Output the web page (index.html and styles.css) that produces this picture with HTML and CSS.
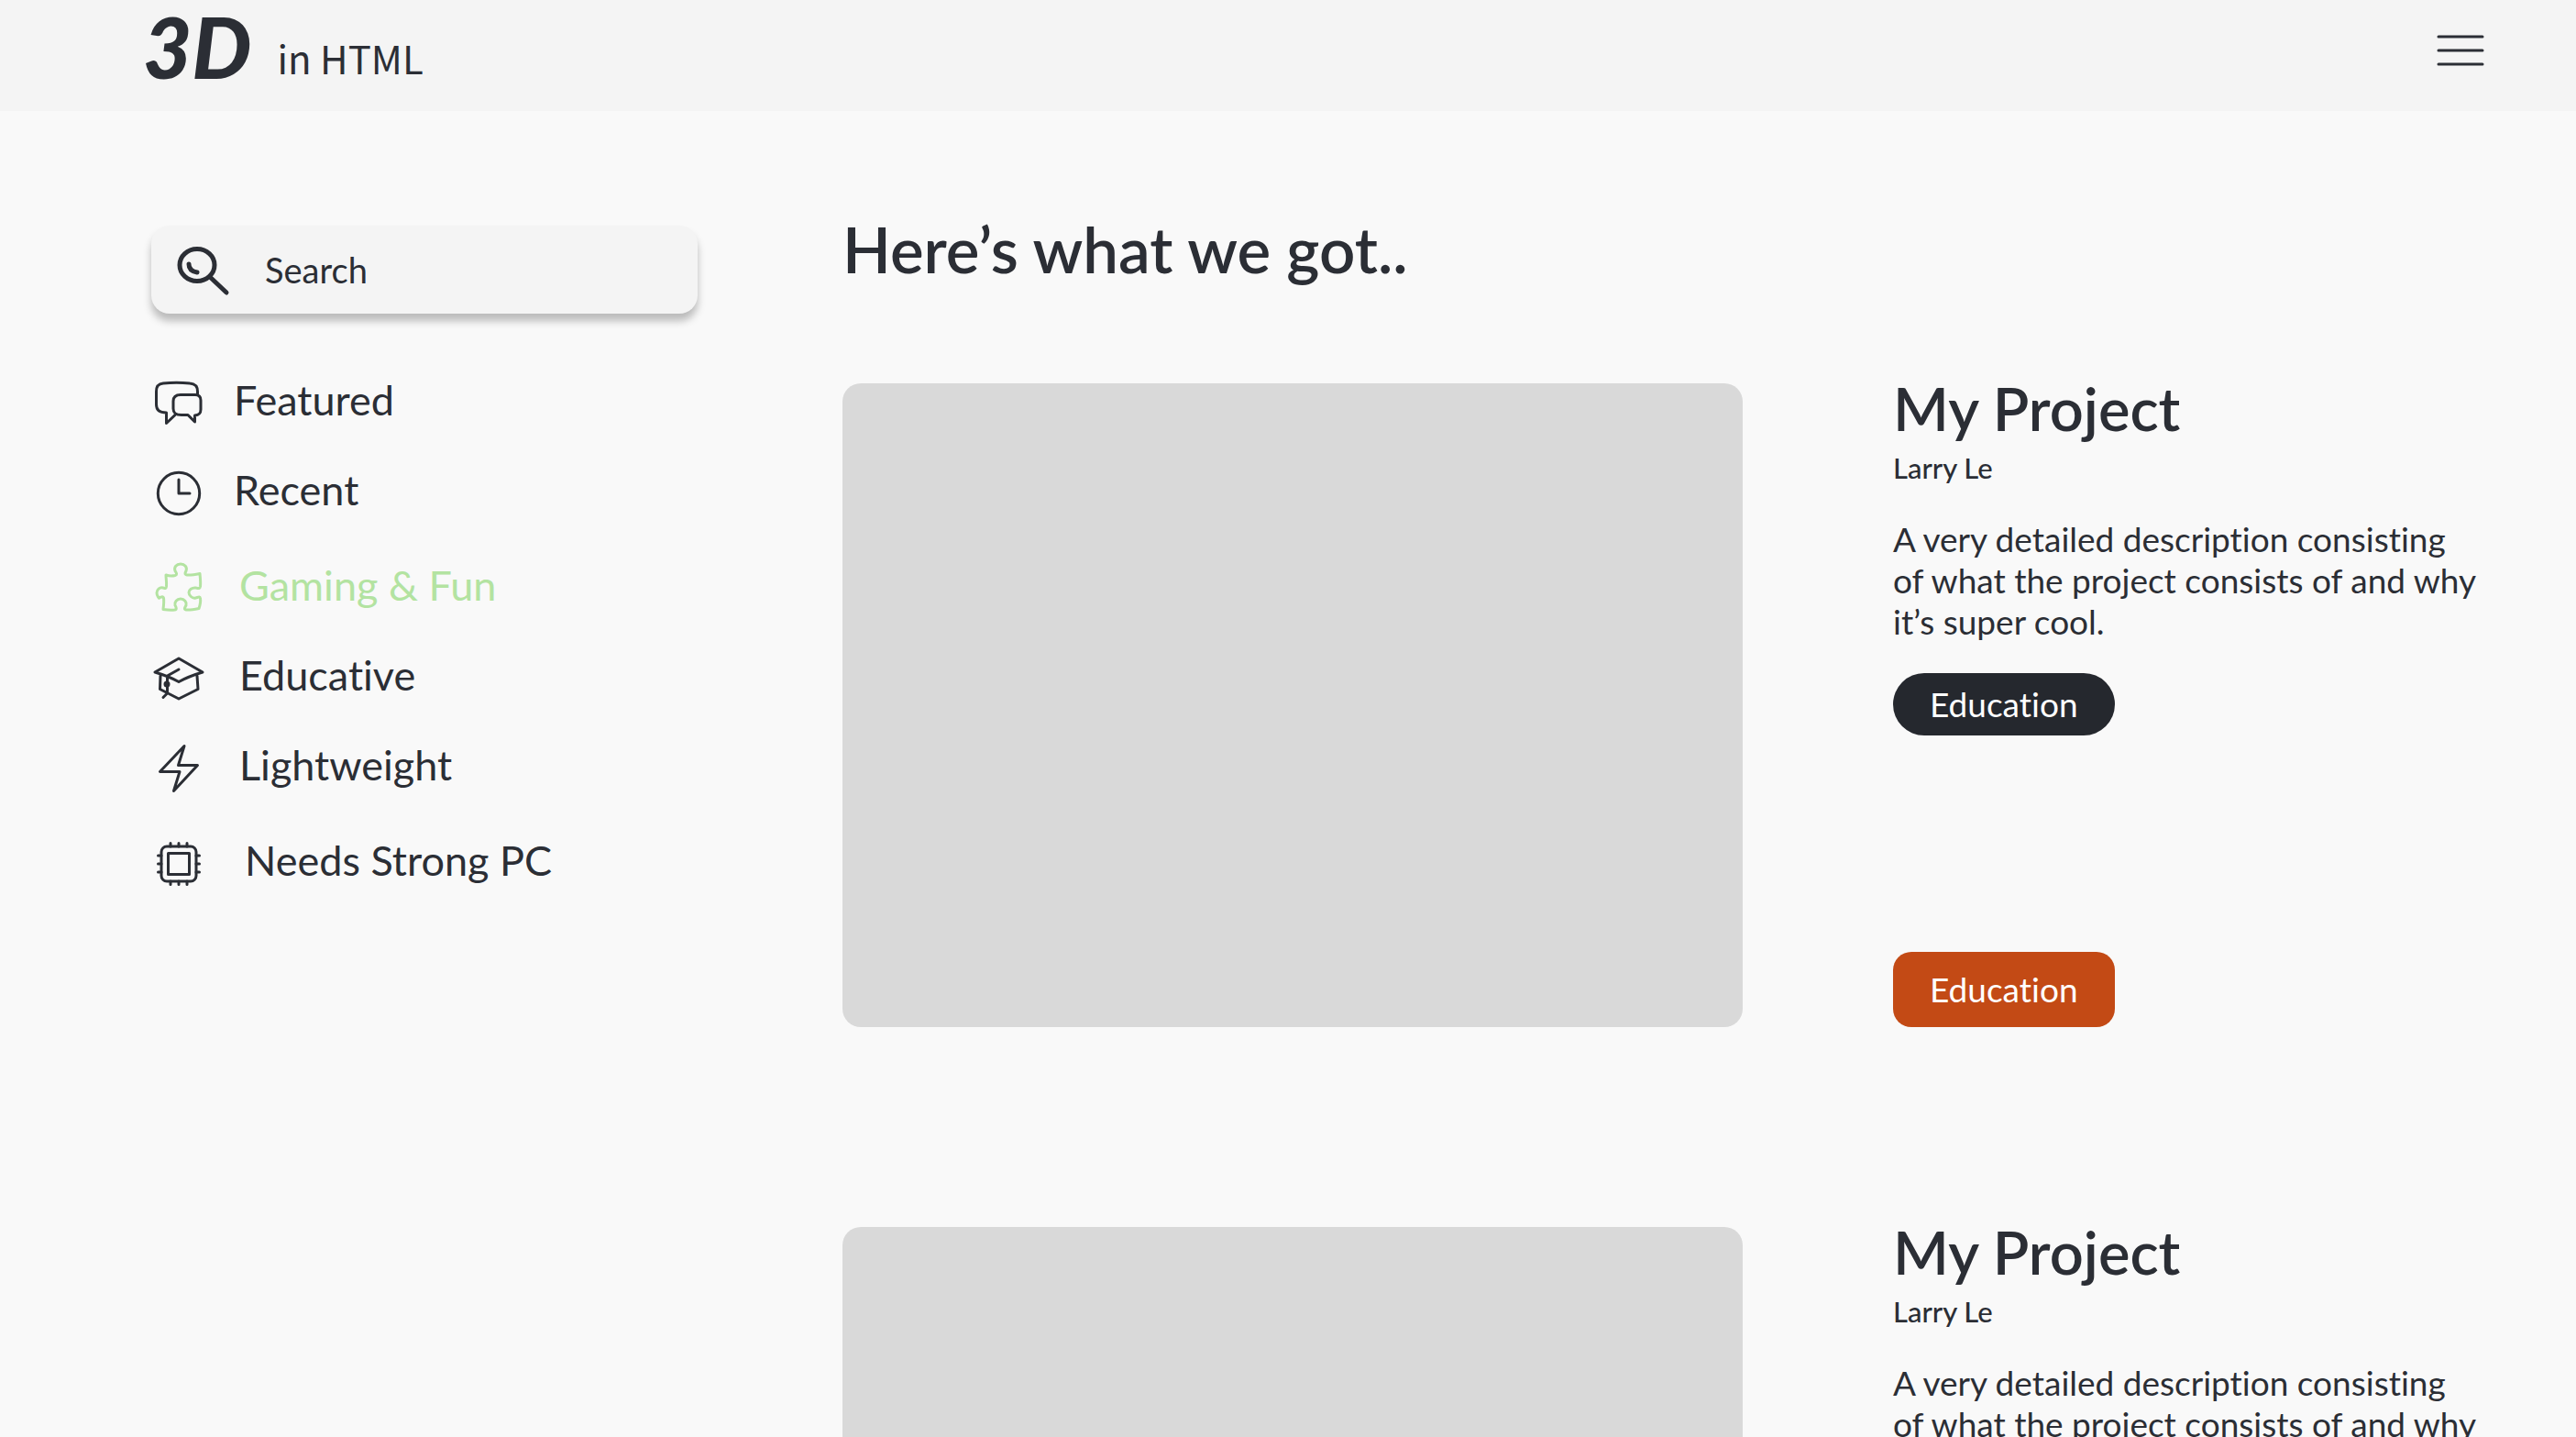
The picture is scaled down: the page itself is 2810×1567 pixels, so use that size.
FILE: index.html
```html
<!DOCTYPE html>
<html lang="en">
<head>
<meta charset="utf-8">
<meta name="viewport" content="width=device-width, initial-scale=1">
<title>3D in HTML</title>
<link rel="stylesheet" href="styles.css">
</head>
<body>
<header class="topbar">
  <a class="brand" href="#"><span class="brand-mark">3D</span><span class="brand-text">in HTML</span></a>
  <button class="menu-button" type="button" aria-label="Menu">
    <svg class="menu-icon" viewBox="0 0 52 36" aria-hidden="true"><path d="M2 3h48M2 18h48M2 33h48"/></svg>
  </button>
</header>

<div class="layout">
  <aside class="sidebar">
    <label class="search">
      <svg class="search-icon" viewBox="0 0 58 54" aria-hidden="true"><ellipse cx="22" cy="22" rx="19" ry="17.500"/><path d="M36 35l18 17M13 21c0 5 3 8 9 9"/></svg>
      <input class="search-input" type="search" placeholder="Search" aria-label="Search">
    </label>

    <nav class="filters" aria-label="Categories">
      <div class="filter-group">
        <a class="filter" href="#">
          <svg class="icon" viewBox="0 0 60 60" aria-hidden="true"><path d="M50.500 20.500V17C50.500 11 48 8.500 42 8c-9-1-20-1-29 0C7.500 8.500 5.500 11 5.500 17v14c0 6 3 9 11 9v11.500L26 42.500M32 20.500h16c4 0 6 2 6 6v10c0 4-1.500 6-6.500 6.500v7L40 42.500h-7c-6.500 0-9-2-9-7v-8c0-5 2.500-7 8-7z"/></svg>
          <span class="filter-label">Featured</span>
        </a>
        <a class="filter" href="#">
          <svg class="icon" viewBox="0 0 60 60" aria-hidden="true"><circle cx="30" cy="30" r="22.700"/><path d="M30 15v15h12"/></svg>
          <span class="filter-label">Recent</span>
        </a>
      </div>
      <div class="filter-group filter-group-mid">
        <a class="filter filter-active" href="#" aria-current="page">
          <svg class="icon" viewBox="0 0 60 60" aria-hidden="true"><path d="M16 15c3 1 8 1 10 .500 3-1 1-3 0-5-1.500-4 1.500-7.500 6-7.500s7.500 3.500 6 7.500c-1 2-2 4 1 4.500 4 .500 9-.500 14-1.500.500 5 1 10 .500 14-.500 3-2.500 2-5 1.500-4-.500-7.500 2-7.500 5s3.500 7 7.500 6c2.500-.500 4.500-2 5 .500.500 3-.500 8-1.500 11-5 1-10 2-14 1.500-3-.500-1-3 0-5 1-3.500-2-7-6-7s-7 3.500-6 7c1 2 2.500 4.500-.500 5-4 .500-9 0-12.500-.500.500-4 1-9 .500-12.500-.500-2.500-2.500-1-5 0C9 41 6 38 6 34.500S9 28 13 29c2 .500 3 1.500 3.500-1.500.500-4-.500-8.500-.500-12.500z"/></svg>
          <span class="filter-label">Gaming &amp; Fun</span>
        </a>
        <a class="filter" href="#">
          <svg class="icon" viewBox="0 0 60 60" aria-hidden="true"><path d="M30 8L56 23C46 26 38 29 30 33.500 22 29 14 26 4 23zM10 27L9.500 41.500 30 52 51 41.500 50 27M30 20L17.500 27V46L13 50.500"/><circle class="solid" cx="17" cy="36" r="2"/></svg>
          <span class="filter-label">Educative</span>
        </a>
        <a class="filter" href="#">
          <svg class="icon" viewBox="0 0 60 60" aria-hidden="true"><path d="M36 5.500L9.500 33.500H31L24.500 54.500 50.500 26.500H29.500z"/></svg>
          <span class="filter-label">Lightweight</span>
        </a>
      </div>
      <div class="filter-group filter-group-last">
        <a class="filter" href="#">
          <svg class="icon" viewBox="0 0 60 60" aria-hidden="true"><rect x="11" y="11" width="38" height="38" rx="6"/><rect x="18.500" y="18.500" width="23" height="23"/><path d="M21 11V7.500M30 11V7.500M39 11V7.500M21 52.500V49M30 52.500V49M39 52.500V49M11 21H7.500M11 30H7.500M11 39H7.500M52.500 21H49M52.500 30H49M52.500 39H49"/></svg>
          <span class="filter-label">Needs Strong PC</span>
        </a>
      </div>
    </nav>
  </aside>

  <main class="results">
    <h1 class="results-title">Here’s what we got..</h1>
    <article class="project">
      <div class="preview"></div>
      <div class="details">
        <h2 class="project-title">My Project</h2>
        <p class="author">Larry Le</p>
        <p class="description">A very detailed description consisting of what the project consists of and why it’s super cool.</p>
        <span class="tag">Education</span>
        <button class="action" type="button">Education</button>
      </div>
    </article>
    <article class="project">
      <div class="preview"></div>
      <div class="details">
        <h2 class="project-title">My Project</h2>
        <p class="author">Larry Le</p>
        <p class="description">A very detailed description consisting of what the project consists of and why it’s super cool.</p>
        <span class="tag">Education</span>
        <button class="action" type="button">Education</button>
      </div>
    </article>
  </main>
</div>
</body>
</html>
```
FILE: styles.css
```css
:root {
  --ink: #2b2e35;
  --page: #f9f9f9;
  --surface: #f4f4f4;
  --accent: #b3e3a1;
}

* {
  box-sizing: border-box;
}

body {
  margin: 0;
  background: var(--page);
  color: var(--ink);
  font-family: Lato, "Liberation Sans", sans-serif;
  font-size: 37px;
  line-height: 45px;
  font-variant-ligatures: none;
}

h1,
h2,
p {
  margin: 0;
}

button,
input {
  font: inherit;
  font-variant-ligatures: none;
  color: inherit;
}

a {
  color: inherit;
  text-decoration: none;
}

.topbar {
  display: flex;
  justify-content: space-between;
  align-items: flex-start;
  height: 121px;
  padding: 0 94px 0 156px;
  background: var(--surface);
}

.brand {
  display: flex;
  align-items: center;
  gap: 28px;
}

.brand-mark {
  font-size: 92px;
  line-height: 102px;
  font-weight: 900;
  font-style: italic;
}

.brand-text {
  padding-top: 24px;
  font-family: "Noto Sans CJK JP", "Noto Sans", sans-serif;
  font-size: 42px;
  line-height: 60px;
}

.menu-button {
  margin-top: 37px;
  padding: 0 6px;
  border: 0;
  background: none;
  line-height: 0;
}

.menu-icon {
  width: 52px;
  height: 36px;
  fill: none;
  stroke: var(--ink);
  stroke-width: 3;
  stroke-linecap: round;
}

.layout {
  display: grid;
  grid-template-columns: 596px minmax(0, 1fr);
  column-gap: 158px;
  padding: 0 100px 0 165px;
}

.sidebar {
  padding-top: 125px;
}

.search {
  display: flex;
  align-items: center;
  gap: 38px;
  height: 96px;
  padding: 0 28px;
  border-radius: 20px;
  background: var(--surface);
  box-shadow: 0 8px 8px rgba(0, 0, 0, 0.25);
}

.search-icon {
  flex: none;
  width: 58px;
  height: 54px;
  overflow: visible;
  fill: none;
  stroke: var(--ink);
  stroke-width: 5;
  stroke-linecap: round;
}

.search-input {
  flex: 1;
  min-width: 0;
  padding: 0;
  border: 0;
  outline: 0;
  background: none;
  font-size: 38px;
}

.search-input::placeholder {
  color: inherit;
  opacity: 1;
}

.filters {
  display: flex;
  flex-direction: column;
  gap: 44px;
  margin-top: 68px;
}

.filter-group {
  display: flex;
  flex-direction: column;
  gap: 38px;
}

.filter {
  display: flex;
  align-items: center;
  gap: 30px;
  height: 60px;
  font-size: 45px;
}

.filter-label {
  padding-bottom: 7px;
}

.filter-group-mid .filter {
  gap: 36px;
}

.filter-group-last .filter {
  gap: 42px;
}

.filter-active {
  color: var(--accent);
}

.icon {
  flex: none;
  width: 60px;
  height: 60px;
  fill: none;
  stroke: currentColor;
  stroke-width: 3;
  stroke-linecap: round;
  stroke-linejoin: round;
}

.icon .solid {
  fill: currentColor;
}

.results {
  padding-top: 111px;
}

.results-title {
  font-size: 69px;
  line-height: 80px;
  font-weight: 600;
}

.project {
  display: grid;
  grid-template-columns: minmax(0, 982fr) minmax(0, 645fr);
  column-gap: 164px;
  margin-top: 106px;
}

.project + .project {
  margin-top: 218px;
}

.preview {
  aspect-ratio: 982 / 702;
  border-radius: 20px;
  background: #d9d9d9;
}

.details {
  display: flex;
  flex-direction: column;
  align-items: flex-start;
}

.project-title {
  font-size: 65px;
  line-height: 54px;
  font-weight: 600;
}

.author {
  margin-top: 16px;
  font-size: 31px;
  font-weight: 500;
}

.description {
  margin-top: 32px;
  padding-right: 6px;
}

.tag {
  margin-top: 34px;
  padding: 0 40px;
  border-radius: 34px;
  background: #25282e;
  color: #fff;
  line-height: 68px;
}

.action {
  margin-top: auto;
  padding: 0 40px;
  border: 0;
  border-radius: 20px;
  background: #c34a15;
  color: #fff;
  line-height: 82px;
}
```
